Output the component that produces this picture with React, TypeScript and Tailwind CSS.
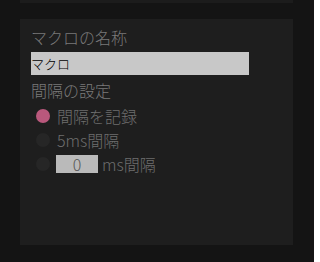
import { useState } from "react";

const font = { fontFamily: '"Noto Sans CJK JP", "Noto Sans", sans-serif' };

function Radio({ checked }: { checked: boolean }) {
  return (
    <span
      className={`block w-[14px] h-[14px] rounded-full shrink-0 ${
        checked ? "bg-[#b9587c]" : "bg-[#262626]"
      }`}
    />
  );
}

export default function App() {
  const [mode, setMode] = useState(0);

  return (
    <div
      className="w-[314px] h-[262px] bg-[#141414] flex flex-col pl-[20px] overflow-hidden"
      style={font}
    >
      <div className="w-[273px] h-[3px] bg-[#1c1c1c] shrink-0" />
      <div className="w-[273px] h-[226px] mt-[16px] bg-[#1e1e1e] pt-[6px] px-[11px] flex flex-col">
        <div className="h-6 leading-6 text-[16px] font-light text-[#7a7a7a]">マクロの名称</div>
        <input
          type="text"
          defaultValue="マクロ"
          className="mt-[3px] w-[218px] h-[23px] bg-[#c8c8c8] text-[13px] font-light text-[#000] px-0 outline-none border-0"
        />
        <div className="mt-[3px] h-6 leading-6 text-[16px] font-light text-[#7a7a7a]">間隔の設定</div>
        <div className="flex flex-col pl-[5px] mt-[1px]">
          <div className="h-[25px] flex items-center gap-[7px]" onClick={() => setMode(0)}>
            <Radio checked={mode === 0} />
            <span className="text-[16px] leading-6 font-light text-[#6e6e6e]">間隔を記録</span>
          </div>
          <div className="h-[24px] flex items-center gap-[7px]" onClick={() => setMode(1)}>
            <Radio checked={mode === 1} />
            <span className="text-[16px] leading-6 font-light text-[#6e6e6e]">5ms間隔</span>
          </div>
          <div className="h-[23px] flex items-center gap-[6px]" onClick={() => setMode(2)}>
            <Radio checked={mode === 2} />
            <input
              type="text"
              defaultValue="0"
              className="w-[42px] h-[18px] bg-[#bababa] text-center text-[16px] leading-none font-light text-[#555] outline-none border-0 p-0"
            />
            <span className="text-[16px] leading-6 font-light text-[#6e6e6e] ml-[-2px]">ms間隔</span>
          </div>
        </div>
      </div>
    </div>
  );
}
